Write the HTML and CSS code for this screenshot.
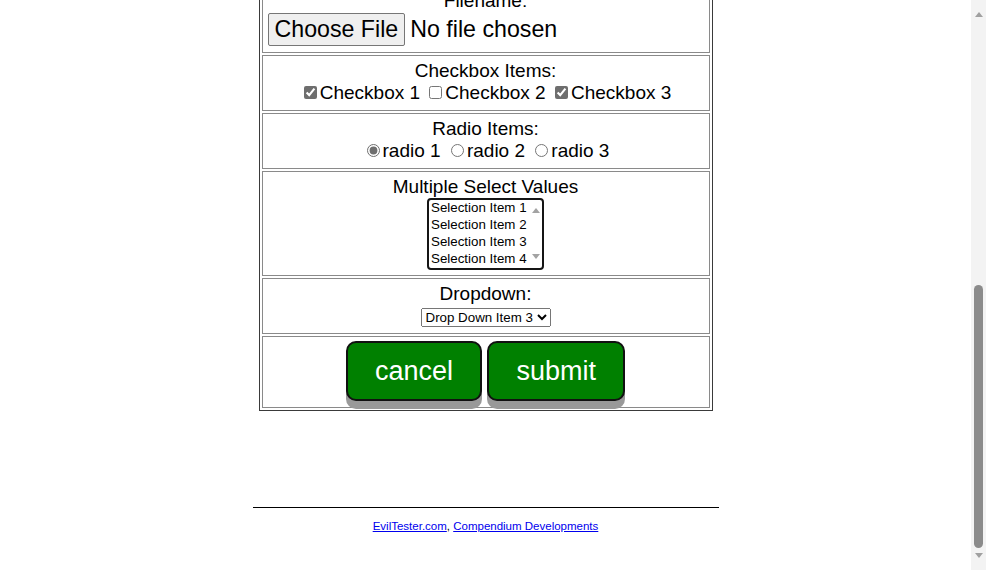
FILE: index.html
```html
<!DOCTYPE html>
<html lang="en">
<head>
<meta charset="utf-8">
<title>Basic HTML Form Example</title>
<link rel="stylesheet" href="styles.css">
</head>
<body>
<div class="screen">
  <main class="page">
    <form class="html-form" onsubmit="return false;">
      <table class="form-table">
        <tbody>
          <tr>
            <td class="cell cell-file">Filename:<br><input class="file-input" type="file" name="filename"></td>
          </tr>
          <tr>
            <td class="cell">Checkbox Items:<br><label class="choice check"><input type="checkbox" name="checkboxes[]" value="cb1" checked>Checkbox 1</label> <label class="choice check"><input type="checkbox" name="checkboxes[]" value="cb2">Checkbox 2</label> <label class="choice check"><input type="checkbox" name="checkboxes[]" value="cb3" checked>Checkbox 3</label></td>
          </tr>
          <tr>
            <td class="cell">Radio Items:<br><label class="choice radio"><input type="radio" name="radioval" value="rd1" checked>radio 1</label> <label class="choice radio"><input type="radio" name="radioval" value="rd2">radio 2</label> <label class="choice radio"><input type="radio" name="radioval" value="rd3">radio 3</label></td>
          </tr>
          <tr>
            <td class="cell cell-multi">Multiple Select Values<br><span class="listbox-wrap"><select class="listbox" multiple size="4" name="multipleselect[]">
              <option value="ms1">Selection Item 1</option>
              <option value="ms2">Selection Item 2</option>
              <option value="ms3">Selection Item 3</option>
              <option value="ms4">Selection Item 4</option>
            </select><span class="lb-arrow lb-up"></span><span class="lb-arrow lb-down"></span></span></td>
          </tr>
          <tr>
            <td class="cell">Dropdown:<br><select class="dropdown" name="dropdown">
              <option value="dd1">Drop Down Item 1</option>
              <option value="dd2">Drop Down Item 2</option>
              <option value="dd3" selected>Drop Down Item 3</option>
              <option value="dd4">Drop Down Item 4</option>
              <option value="dd5">Drop Down Item 5</option>
              <option value="dd6">Drop Down Item 6</option>
            </select></td>
          </tr>
          <tr>
            <td class="cell cell-buttons"><button class="styled-btn" type="reset">cancel</button> <button class="styled-btn" type="submit">submit</button></td>
          </tr>
        </tbody>
      </table>
    </form>
    <footer class="footer">
      <hr class="rule">
      <p class="credits"><a href="#">EvilTester.com</a>, <a href="#">Compendium Developments</a></p>
    </footer>
  </main>
  <div class="scrollbar" aria-hidden="true">
    <div class="sb-btn sb-btn-up"><span class="tri tri-up"></span></div>
    <div class="sb-track"><div class="sb-thumb"></div></div>
    <div class="sb-btn sb-btn-down"><span class="tri tri-down"></span></div>
  </div>
</div>
</body>
</html>
```

FILE: styles.css
```css
html, body {
  margin: 0;
  padding: 0;
  height: 100%;
  overflow: hidden;
  background: #ffffff;
}

.screen {
  display: flex;
  height: 570px;
  width: 986px;
}

.page {
  flex: 1;
  overflow: hidden;
  font-family: "Liberation Sans", Arial, sans-serif;
  color: #000;
}

.html-form {
  margin: 0;
}

.form-table {
  width: 454px;
  margin: -18px auto 0;
  border: 1px solid #3a3a3a;
  border-spacing: 2px;
}

.cell {
  border: 1px solid #8a8a8a;
  padding: 4px 5px 6px;
  text-align: center;
  font-size: 19px;
  line-height: 22px;
}

.cell-multi {
  padding-bottom: 5px;
}

.file-input {
  font-family: "Liberation Sans", Arial, sans-serif;
  font-size: 23.2px;
  color: #000;
  max-width: 100%;
  width: 436px;
  display: inline-block;
  text-align: left;
  margin-top: 1px;
}

.file-input::file-selector-button {
  font: inherit;
  padding: 2px 6px;
  margin-right: 5px;
  border: 1px solid #767676;
  border-radius: 2px;
  background: #efefef;
  color: #000;
}

.choice {
  white-space: nowrap;
}

.choice input {
  accent-color: #6e6e6e;
}

.check input {
  margin: 3px 3px 3px 4px;
}

.radio input {
  margin: 3px 3px 0 5px;
}

.listbox-wrap {
  position: relative;
  display: inline-block;
  vertical-align: top;
}

.listbox {
  display: block;
  width: 117px;
  height: 72px;
  box-sizing: border-box;
  border: 2px solid #151515;
  border-radius: 4px;
  padding: 0;
  margin: 0;
  font-family: "Liberation Sans", Arial, sans-serif;
  font-size: 13.33px;
  color: #000;
  background: #fff;
  overflow: hidden;
  scrollbar-width: none;
  outline: none;
}

.listbox::-webkit-scrollbar {
  display: none;
}

.listbox option {
  padding: 0 2px;
  height: 17px;
  line-height: 17px;
}

.lb-arrow {
  position: absolute;
  right: 4px;
  width: 0;
  height: 0;
  border-left: 4px solid transparent;
  border-right: 4px solid transparent;
}

.lb-up {
  top: 10px;
  border-bottom: 5px solid #a3a3a3;
}

.lb-down {
  bottom: 11px;
  border-top: 5px solid #a3a3a3;
}

.dropdown {
  font-family: "Liberation Sans", Arial, sans-serif;
  font-size: 13.33px;
  color: #000;
  margin: 0;
}

.styled-btn {
  font-family: "Liberation Sans", Arial, sans-serif;
  font-size: 27px;
  line-height: 32px;
  padding: 12px 27px;
  color: #fff;
  background: #008000;
  border: 2px solid #111;
  border-radius: 10px;
  box-shadow: 0 8px #999;
  vertical-align: top;
  margin: 0;
  cursor: pointer;
}

.footer {
  width: 466px;
  margin: 96px auto 0;
}

.rule {
  border: 0;
  border-top: 1px solid #000;
  margin: 0;
  height: 0;
}

.credits {
  margin: 12px 0 0;
  text-align: center;
  font-size: 11.5px;
}

.credits a {
  color: #0000ee;
}

.scrollbar {
  width: 15px;
  background: #f3f3f3;
  display: flex;
  flex-direction: column;
  align-items: center;
}

.sb-btn {
  height: 17px;
  display: flex;
  justify-content: center;
}

.sb-btn-up {
  align-items: flex-end;
}

.sb-btn-down {
  align-items: flex-start;
}

.tri {
  width: 0;
  height: 0;
  border-left: 4px solid transparent;
  border-right: 4px solid transparent;
}

.tri-up {
  border-bottom: 5px solid #a0a0a0;
}

.tri-down {
  border-top: 5px solid #a0a0a0;
}

.sb-track {
  flex: 1;
  display: flex;
  flex-direction: column;
  justify-content: flex-end;
  padding-bottom: 5px;
}

.sb-thumb {
  width: 9px;
  height: 263px;
  border-radius: 5px;
  background: #8b8b8b;
}
```
